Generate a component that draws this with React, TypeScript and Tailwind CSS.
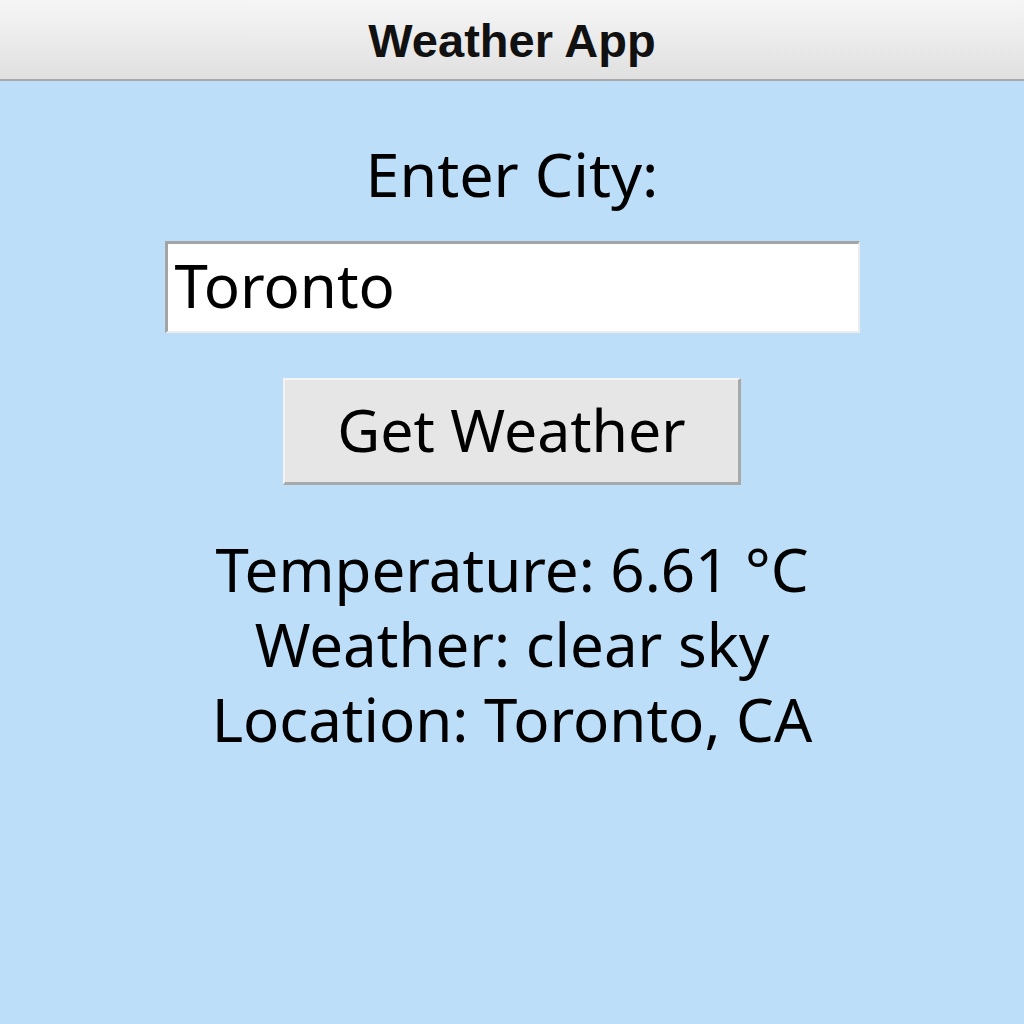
import React from "react";

export default function App() {
  const body = { fontFamily: '"Noto Sans", "DejaVu Sans", sans-serif' };
  return (
    <div className="w-[1024px] h-[1024px] bg-[#bcdef8] flex flex-col overflow-hidden">
      <div className="h-[81px] shrink-0 box-border border-b-2 border-[#a9a9a9] bg-gradient-to-b from-[#f6f6f6] to-[#e0e0e0] flex justify-center">
        <div
          className="pt-[4px] leading-[74px] text-[47px] font-bold text-[#111]"
          style={{ fontFamily: '"Liberation Sans", Arial, sans-serif' }}
        >
          Weather App
        </div>
      </div>
      <div className="flex flex-col items-center text-black" style={body}>
        <div className="mt-[58px] text-[61px] leading-[70px]">Enter City:</div>
        <input
          readOnly
          value="Toronto"
          className="mt-[32px] w-[695px] h-[92px] box-border bg-white border-t-[3px] border-l-[3px] border-b-2 border-r-2 border-t-[#a4a4a4] border-l-[#a4a4a4] border-b-[#ececec] border-r-[#ececec] pl-[7px] pb-[5px] text-[60px] text-black outline-none"
          style={body}
        />
        <button
          className="mt-[45px] w-[458px] h-[107px] box-border bg-[#e6e6e6] border-t-2 border-l-2 border-b-[3px] border-r-[3px] border-t-[#f4f4f4] border-l-[#f4f4f4] border-b-[#a8a8a8] border-r-[#a8a8a8] pb-[4px] text-[59px] text-black flex items-center justify-center"
          style={body}
        >
          Get Weather
        </button>
        <div className="mt-[47px] flex flex-col items-center text-[60px] leading-[75px]">
          <div>Temperature: 6.61 °C</div>
          <div>Weather: clear sky</div>
          <div>Location: Toronto, CA</div>
        </div>
      </div>
    </div>
  );
}
